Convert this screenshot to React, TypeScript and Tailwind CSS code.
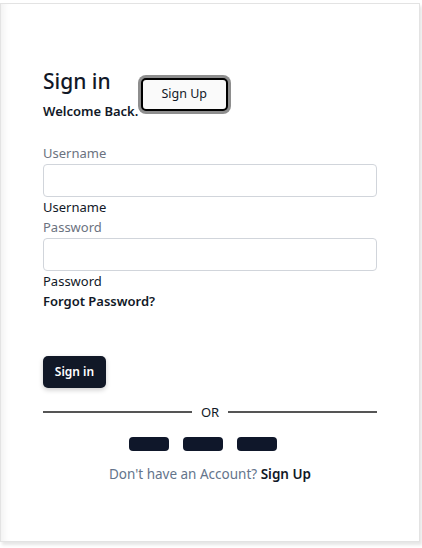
import React from "react";

export default function App() {
  const font = { fontFamily: '"Noto Sans", "Open Sans", sans-serif' };
  return (
    <div className="w-[422px] h-[548px] bg-white pt-[3px]" style={font}>
      <div className="w-[420px] h-[539px] bg-white border border-[#e3e3e3] shadow-[2px_3px_3px_rgba(0,0,0,0.1),inset_9px_0_8px_-7px_rgba(0,0,0,0.07)] pl-[42px] pr-[42px] pt-[63px] text-[#111827]">
        <div className="flex h-[28px] items-start">
          <h2 className="text-[21px] leading-[28px] font-medium">Sign in</h2>
          <button className="ml-[30px] mt-[11px] w-[87px] h-[33px] shrink-0 rounded-[5px] border-2 border-black bg-[#fafafa] shadow-[0_0_0_3px_#8e8e8e] text-[12.5px] text-[#111827] relative z-10">
            Sign Up
          </button>
        </div>
        <p className="mt-[6px] text-[13px] leading-[20px] font-semibold">Welcome Back.</p>

        <div className="mt-[22px] flex flex-col">
          <label className="text-[13px] leading-[20px] text-[#6b7280]">Username</label>
          <input className="mt-[1px] h-[33px] w-full rounded-[4px] border border-[#d1d5db] bg-white" />
          <span className="text-[13px] leading-[20px] text-[#111827]">Username</span>
          <label className="text-[13px] leading-[20px] text-[#6b7280]">Password</label>
          <input type="password" className="mt-[1px] h-[33px] w-full rounded-[4px] border border-[#d1d5db] bg-white" />
          <span className="text-[13px] leading-[20px] text-[#111827]">Password</span>
          <span className="text-[13px] leading-[20px] font-semibold text-[#111827]">Forgot Password?</span>
        </div>

        <button className="mt-[45px] w-[63px] h-[32px] rounded-[5px] bg-[#111827] text-white text-[12px] font-semibold shadow-[0_2px_5px_rgba(0,0,0,0.2)]">
          Sign in
        </button>

        <div className="mt-[14px] flex items-center h-[20px]">
          <div className="flex-1 h-[2px] bg-[#555555]" />
          <span className="px-[9px] text-[13px] leading-[20px] text-[#111827]">OR</span>
          <div className="flex-1 h-[2px] bg-[#555555]" />
        </div>

        <div className="mt-[15px] flex justify-center">
          <button className="mr-[14px] w-[40px] h-[14px] rounded-[4px] bg-[#0f172a]" />
          <button className="mr-[14px] w-[40px] h-[14px] rounded-[4px] bg-[#0f172a]" />
          <button className="mr-[14px] w-[40px] h-[14px] rounded-[4px] bg-[#0f172a]" />
        </div>

        <p className="mt-[13px] text-center text-[13.5px] leading-[20px] text-[#64748b]">
          Don't have an Account? <span className="font-semibold text-[#111827]">Sign Up</span>
        </p>
      </div>
    </div>
  );
}
